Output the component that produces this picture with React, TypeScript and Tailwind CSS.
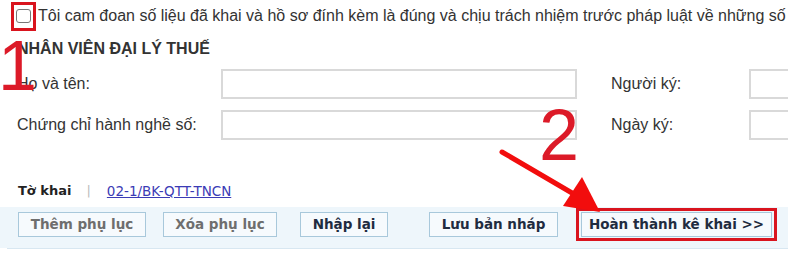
export default function App() {
  const label = "text-[16px] text-[#333] [font-family:'Liberation_Sans',Arial,sans-serif]";
  const input = "h-[30px] border-2 border-[#d9d9d9] bg-white";
  const btn =
    "flex h-[25px] items-center justify-center border border-[#a8c8db] bg-[#f6fafd] text-[13.5px] font-bold [font-family:'DejaVu_Sans',Verdana,sans-serif]";

  return (
    <div className="relative h-[259px] w-[788px] overflow-hidden bg-white">
      {/* declaration */}
      <div className="flex h-[32px] items-center whitespace-nowrap pl-[16px] text-[16px] text-[#333] [font-family:'Liberation_Sans',Arial,sans-serif]">
        <span className="h-[14px] w-[15px] shrink-0 rounded-[3px] border border-[#777] bg-white" />
        <span className="ml-[7px]">
          Tôi cam đoan số liệu đã khai và hồ sơ đính kèm là đúng và chịu trách nhiệm trước pháp luật về những số liệu đã khai.
        </span>
      </div>

      <div className="mt-[8px] pl-[17px] text-[16px] font-bold leading-[18px] text-[#333] [font-family:'Liberation_Sans',Arial,sans-serif]">
        NHÂN VIÊN ĐẠI LÝ THUẾ
      </div>

      {/* agent form */}
      <div className="mt-[11px] grid grid-cols-[204px_356px_172px_200px] items-center gap-x-0 gap-y-[11px] pl-[17px]">
        <span className={label}>Họ và tên:</span>
        <div className={input} />
        <span className={`${label} pl-[34px]`}>Người ký:</span>
        <div className={input} />
        <span className={label}>Chứng chỉ hành nghề số:</span>
        <div className={input} />
        <span className={`${label} pl-[34px]`}>Ngày ký:</span>
        <div className={input} />
      </div>

      {/* form tab */}
      <div className="mt-[43px] flex h-[16px] items-center whitespace-nowrap pl-[18px] text-[13px] leading-[16px] [font-family:'DejaVu_Sans',Verdana,sans-serif]">
        <span className="font-bold text-[#222]">Tờ khai</span>
        <span className="ml-[15px] text-[#bbb]">|</span>
        <a href="#" className="ml-[16px] text-[13.5px] text-[#3b3bb5] underline">
          02-1/BK-QTT-TNCN
        </a>
      </div>

      {/* actions */}
      <div className="mt-[8px] bg-[#eef6fb] pb-[7px] pt-[1px]">
        <div className="flex items-center pl-[18px]">
          <button className={`${btn} w-[128px] text-[#6e6e6e]`}>Thêm phụ lục</button>
          <button className={`${btn} ml-[17px] w-[114px] text-[#6e6e6e]`}>Xóa phụ lục</button>
          <button className={`${btn} ml-[23px] w-[88px] text-[#1f2c40]`}>Nhập lại</button>
          <button className={`${btn} ml-[41px] w-[129px] text-[#1f2c40]`}>Lưu bản nháp</button>
          <div className="ml-[18px] border-[3px] border-[#d9141e] px-[2px] py-[1px]">
            <button className={`${btn} w-[191px] text-[#1f2c40]`}>Hoàn thành kê khai &gt;&gt;</button>
          </div>
        </div>
      </div>
      <div className="ml-[7px] h-px bg-[#d8e7f1]" />

      {/* annotations */}
      <div className="absolute left-[11px] top-[2px] h-[29px] w-[25px] border-[3px] border-[#d9141e]" />
      <span className="absolute left-[-2px] top-[31px] text-[70px] leading-[70px] text-[#dc1a28] [font-family:'Liberation_Sans',Arial,sans-serif]">
        1
      </span>
      <span className="absolute left-[539px] top-[99px] text-[72px] leading-[72px] text-[#dc1a28] [font-family:'Liberation_Sans',Arial,sans-serif]">
        2
      </span>
      <svg className="pointer-events-none absolute left-0 top-0" width="788" height="259">
        <line x1="502" y1="152" x2="584" y2="200" stroke="#f20d0d" strokeWidth="5" strokeLinecap="round" />
        <polygon points="582,177 563,206 600,212" fill="#f20d0d" />
      </svg>
    </div>
  );
}
